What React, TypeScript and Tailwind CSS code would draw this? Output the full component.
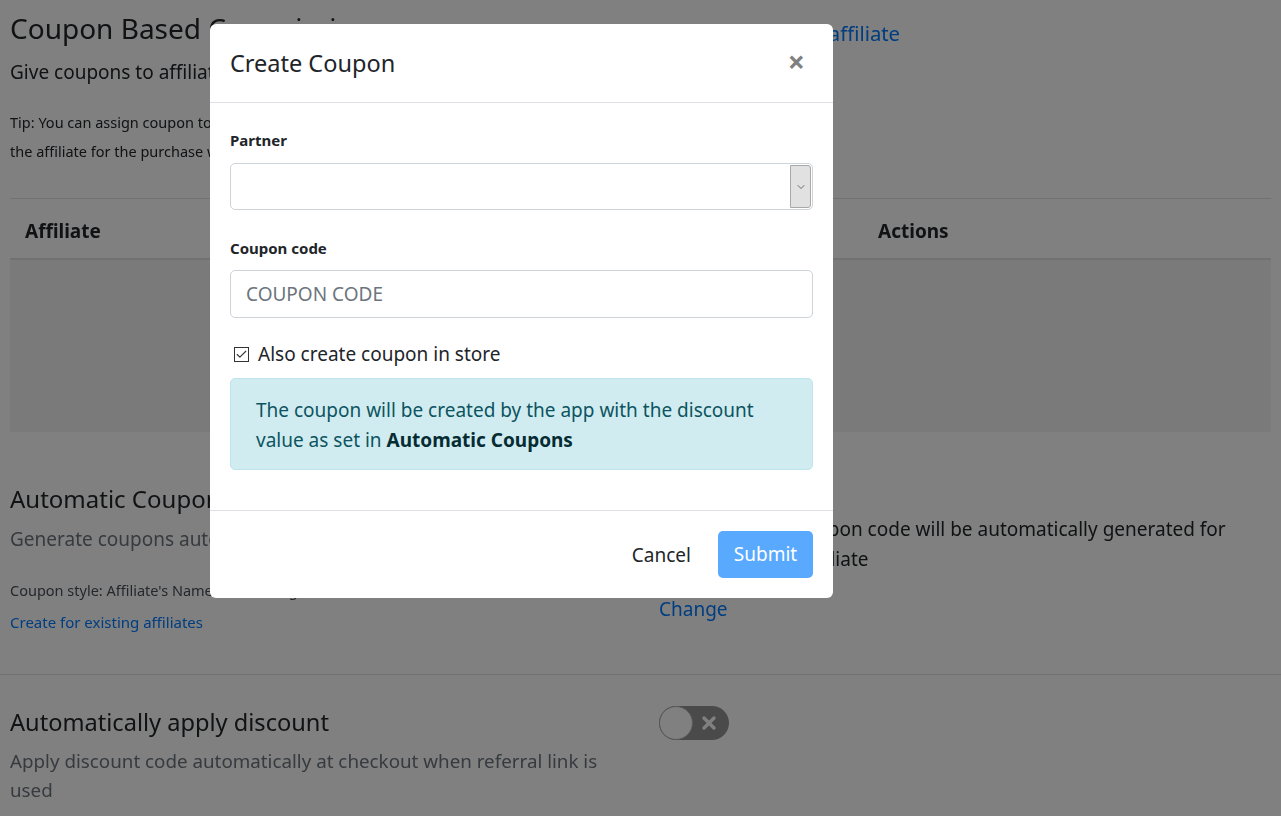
// Coupon settings page with the "Create Coupon" modal open over it.
import { Check, ChevronDown, X } from "lucide-react";

function Toggle() {
  return (
    <div className="relative flex h-[34px] w-[70px] items-center rounded-full bg-[#949494]">
      <div className="h-[34px] w-[34px] rounded-full border border-[#b0b0b0] bg-white" />
      <X className="ml-[6px] h-[20px] w-[20px] text-white" strokeWidth={4} />
    </div>
  );
}

function Page() {
  return (
    <div className="h-full bg-white pt-[11px]">
      {/* Coupon based commissions */}
      <div className="grid grid-cols-[639px_1fr] gap-x-[10px] px-[10px]">
        <div>
          <h1 className="text-[28px] leading-[34px]">Coupon Based Commissions</h1>
          <p className="mt-[13px] text-[19px] leading-[28px]">Give coupons to affiliates so they can share them</p>
          <p className="mt-[22px] text-[14.5px] leading-[29px]">
            Tip: You can assign coupon to an affiliate and every order placed with that coupon credits
            <br />
            the affiliate for the purchase with a commission
          </p>
        </div>
        <div className="pt-[8px]">
          <a className="text-[20.3px] leading-[28px] text-[#007bff]">Assign coupon to affiliate</a>
        </div>
      </div>

      <div className="mx-[10px] mt-[32px] border-t border-[#dee2e6]">
        <div className="grid h-[61px] grid-cols-[426px_427px_1fr] items-center border-b-2 border-[#dee2e6] pt-[6px] text-[19px] font-bold">
          <div className="pl-[15px]">Affiliate</div>
          <div className="pl-[15px]">Coupon code</div>
          <div className="pl-[15px]">Actions</div>
        </div>
        <div className="h-[172px] bg-[#f3f3f3]" />
      </div>

      {/* Automatic coupons */}
      <div className="mt-[52px] grid grid-cols-[639px_1fr] gap-x-[10px] px-[10px]">
        <div>
          <h2 className="text-[24px] leading-[30px]">Automatic Coupons</h2>
          <p className="mt-[11px] text-[19px] leading-[28px] text-[#6c757d]">Generate coupons automatically for new affiliates</p>
          <p className="mt-[26px] text-[14.5px] leading-[22px] text-[#495057]">Coupon style: Affiliate's Name + Percentage off</p>
          <a className="mt-[10px] block text-[15px] leading-[22px] text-[#007bff]">Create for existing affiliates</a>
        </div>
        <div className="pt-[30px]">
          <p className="text-[19px] leading-[30px]">
            A personalized coupon code will be automatically generated for
            <br />
            every approved affiliate
          </p>
          <a className="mt-[21px] block text-[19px] leading-[28px] text-[#007bff]">Change</a>
        </div>
      </div>

      <div className="mt-[41px] border-t border-[#dee2e6]" />

      {/* Automatically apply discount */}
      <div className="mt-[32px] grid grid-cols-[639px_1fr] gap-x-[10px] px-[10px]">
        <div>
          <h2 className="text-[23.6px] leading-[30px]">Automatically apply discount</h2>
          <p className="mt-[10px] text-[18.8px] leading-[29px] text-[#6c757d]">
            Apply discount code automatically at checkout when referral link is
            <br />
            used
          </p>
        </div>
        <div className="-mt-[1px]">
          <Toggle />
        </div>
      </div>
    </div>
  );
}

function CreateCouponModal() {
  return (
    <div className="absolute left-[210px] top-[24px] w-[623px] rounded-[6px] bg-white">
      <div className="flex h-[79px] items-center justify-between border-b border-[#dee2e6] px-[20px]">
        <h5 className="text-[23.5px] leading-[30px]">Create Coupon</h5>
        <span className="mb-[2px] mr-[8px] text-[30px] font-bold leading-none text-[#808080]">×</span>
      </div>

      <div className="px-[20px] pb-[40px] pt-[26px]">
        <label className="block text-[15px] font-bold leading-[22px]">Partner</label>
        <div className="mt-[12px] flex h-[47px] rounded-[5px] border border-[#ced4da]">
          <div className="flex-1" />
          <div className="my-[1px] mr-[1px] flex w-[21px] items-center justify-center rounded-r-[3px] border border-[#a8a8a8] bg-[#e1e1e1]">
            <ChevronDown className="h-[12px] w-[12px] text-[#444]" strokeWidth={1.5} />
          </div>
        </div>

        <label className="mt-[27px] block text-[15px] font-bold leading-[22px]">Coupon code</label>
        <div className="mt-[11px] flex h-[48px] items-center rounded-[5px] border border-[#ced4da] px-[15px] text-[19px] text-[#6c757d]">
          COUPON CODE
        </div>

        <div className="mt-[23px] flex items-center gap-[9px] text-[19px] leading-[26px]">
          <span className="ml-[4px] flex h-[15px] w-[15px] items-center justify-center border border-[#333]">
            <Check className="h-[13px] w-[13px] text-[#333]" strokeWidth={2} />
          </span>
          <span>Also create coupon in store</span>
        </div>

        <div className="mt-[11px] rounded-[5px] border border-[#bee5eb] bg-[#d1ecf1] px-[25px] pb-[14px] pt-[16px] text-[19px] leading-[30px] text-[#0c5460]">
          The coupon will be created by the app with the discount
          <br />
          value as set in <b className="text-[#062c33]">Automatic Coupons</b>
        </div>
      </div>

      <div className="flex items-center justify-end gap-[27px] border-t border-[#dee2e6] px-[20px] py-[20px]">
        <span className="text-[19px] leading-[28px]">Cancel</span>
        <span className="flex h-[47px] w-[95px] items-center justify-center rounded-[5px] bg-[#59a9ff] text-[19px] text-white">
          Submit
        </span>
      </div>
    </div>
  );
}

export default function App() {
  return (
    <div className="relative h-[816px] w-full overflow-hidden bg-[#808080] font-['Noto_Sans',sans-serif] text-[#212529]">
      {/* backdrop: the page dimmed to half brightness, as under a 50% black overlay */}
      <div className="h-full brightness-50">
        <Page />
      </div>
      <CreateCouponModal />
    </div>
  );
}
